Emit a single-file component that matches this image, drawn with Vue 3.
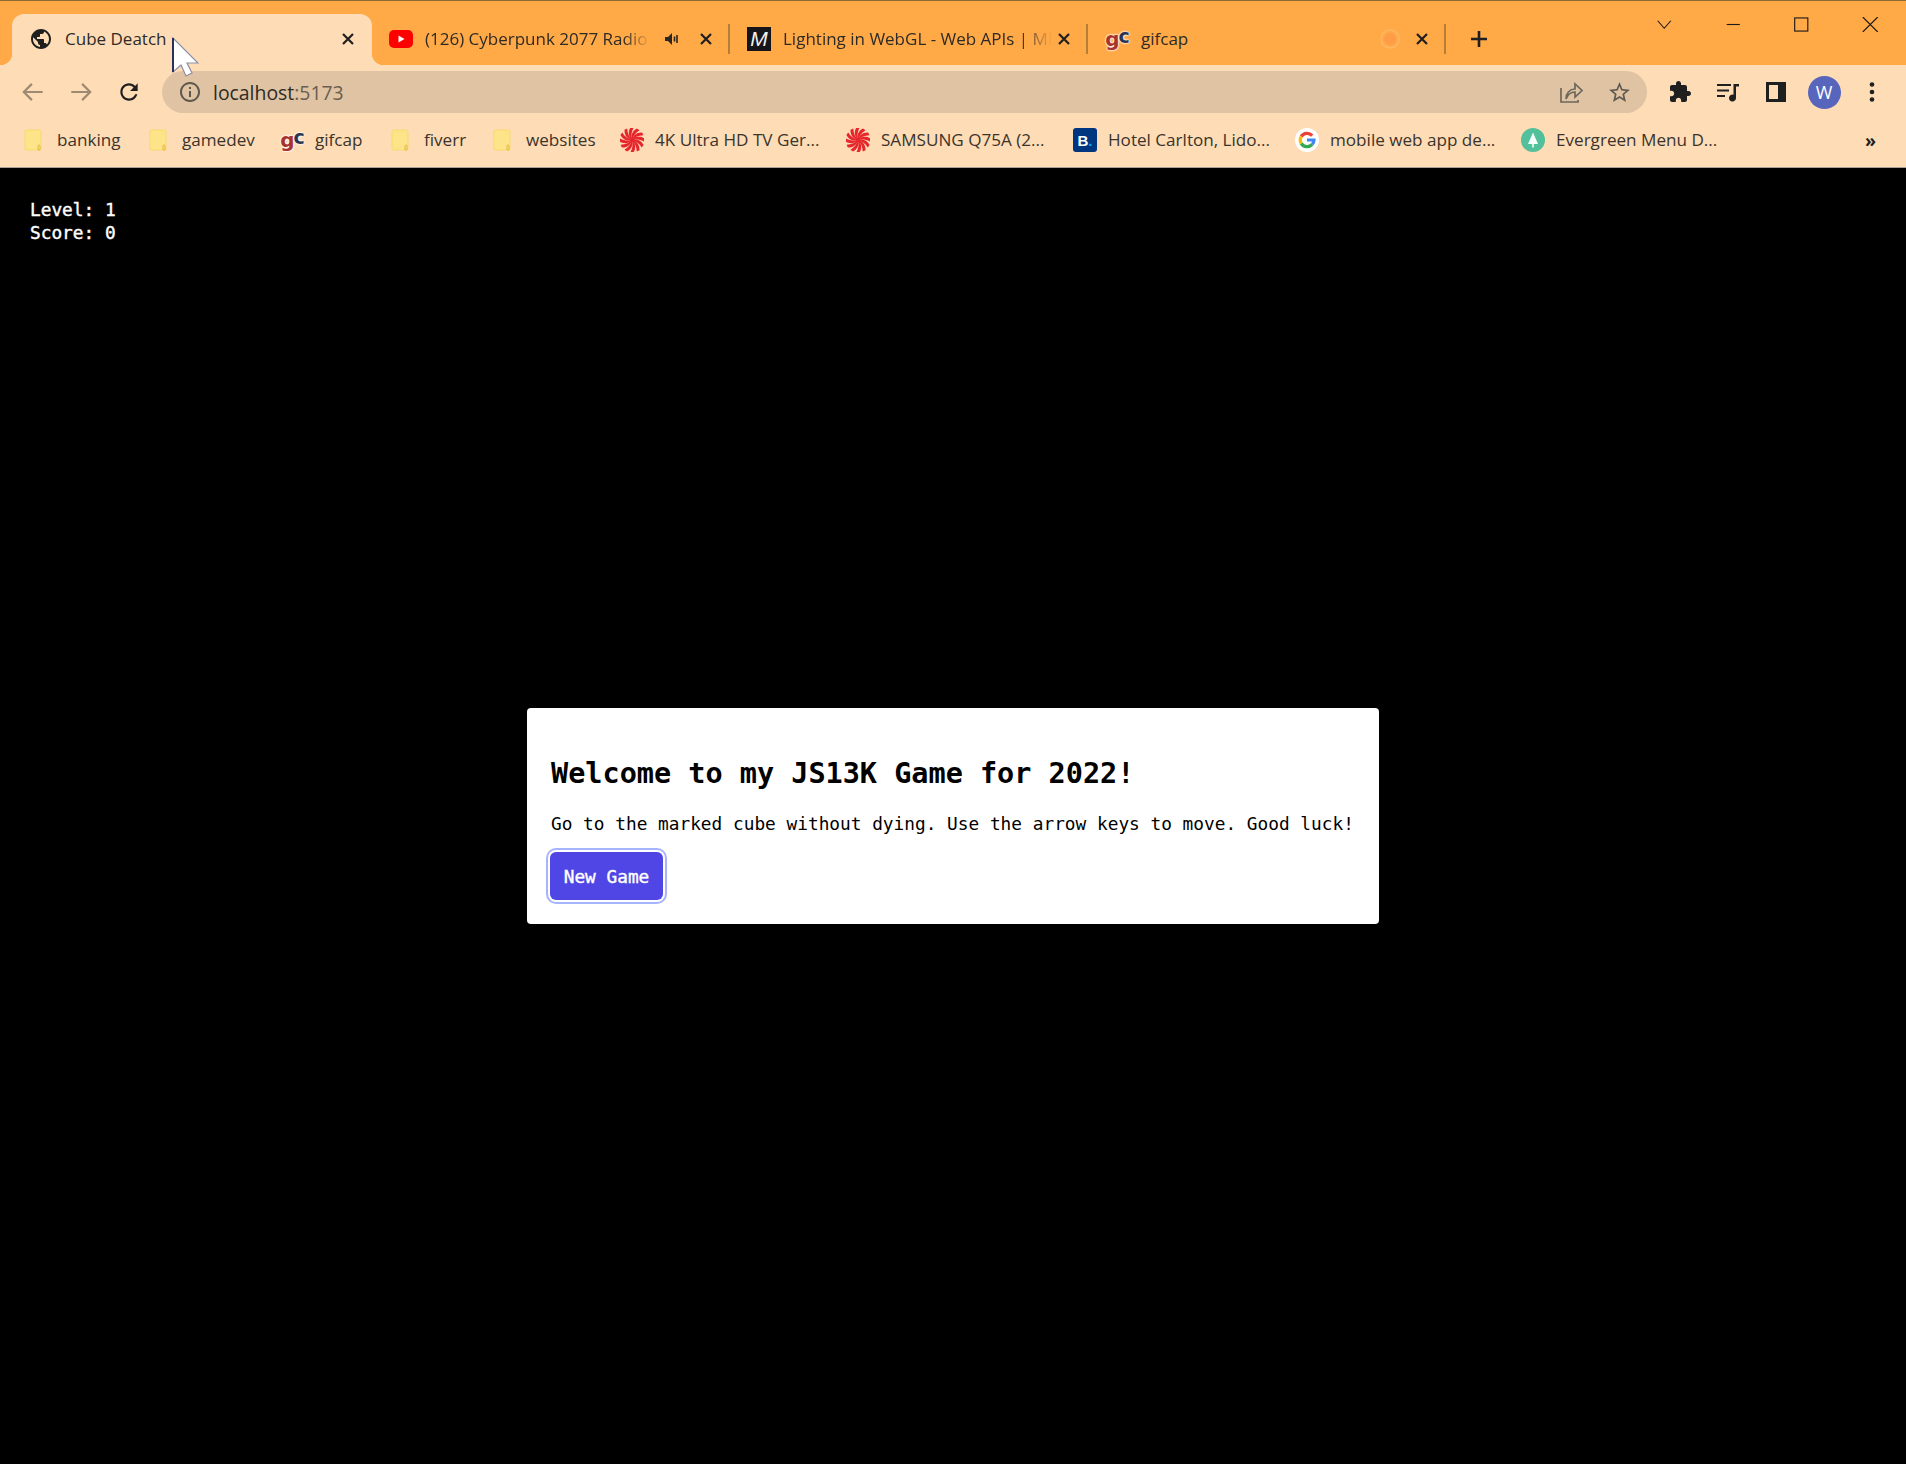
<template>
  <div class="browser">
    <div class="tabstrip">
      <div class="tab active">
        <svg class="fav" viewBox="0 0 24 24"><path fill="#1f1f1f" d="M12 2C6.48 2 2 6.48 2 12s4.48 10 10 10 10-4.48 10-10S17.52 2 12 2zm-1 17.93c-3.95-.49-7-3.85-7-7.93 0-.62.08-1.21.21-1.79L9 15v1c0 1.1.9 2 2 2v1.93zm6.9-2.54c-.26-.81-1-1.39-1.9-1.39h-1v-3c0-.55-.45-1-1-1H8v-2h2c.55 0 1-.45 1-1V7h2c1.1 0 2-.9 2-2v-.41c2.93 1.19 5 4.06 5 7.41 0 2.08-.8 3.97-2.1 5.39z"/></svg>
        <span class="title">Cube Deatch</span>
        <svg class="close" viewBox="0 0 12 12"><path d="M1 1l10 10M11 1L1 11"/></svg>
      </div>
      <div class="tab">
        <svg class="fav" viewBox="0 0 24 24"><rect x="0" y="3" width="24" height="18" rx="5" fill="#f00"/><path d="M9.500 8.500v7l6-3.500z" fill="#fff"/></svg>
        <span class="title fade">(126) Cyberpunk 2077 Radio</span>
        <svg class="audio" viewBox="0 0 16 16"><path fill="#2a2620" d="M1 6h3l4-4v12l-4-4H1z"/><path d="M10.500 5.500v5M13 4v8" stroke="#2a2620" stroke-width="1.600"/></svg>
        <svg class="close" viewBox="0 0 12 12"><path d="M1 1l10 10M11 1L1 11"/></svg>
      </div>
      <i class="sep"></i>
      <div class="tab">
        <span class="fav mdn">M</span>
        <span class="title fade">Lighting in WebGL - Web APIs | MDN</span>
        <svg class="close" viewBox="0 0 12 12"><path d="M1 1l10 10M11 1L1 11"/></svg>
      </div>
      <i class="sep"></i>
      <div class="tab">
        <span class="fav gc"><b>g</b><em>c</em></span>
        <span class="title">gifcap</span>
        <svg class="spin" viewBox="0 0 20 20"><circle cx="10" cy="10" r="9" fill="none" stroke="#ffb765" stroke-width="1.500"/><circle cx="10" cy="10" r="6" fill="#ff9c48"/></svg>
        <svg class="close" viewBox="0 0 12 12"><path d="M1 1l10 10M11 1L1 11"/></svg>
      </div>
      <i class="sep"></i>
      <svg class="plus" viewBox="0 0 18 18"><path d="M9 1v16M1 9h16"/></svg>
      <div class="winctl">
        <svg viewBox="0 0 16 16"><path d="M1 4l7 8 7-8"/></svg>
        <svg viewBox="0 0 16 16"><path d="M1 8h14"/></svg>
        <svg viewBox="0 0 16 16"><rect x="1" y="1" width="14" height="14"/></svg>
        <svg viewBox="0 0 16 16"><path d="M0 0l16 16M16 0L0 16"/></svg>
      </div>
    </div>

    <div class="toolbar">
      <button class="nav"><svg viewBox="0 0 24 24"><path class="dim" d="M21 12H4M11 4.500L3.500 12l7.500 7.500"/></svg></button>
      <button class="nav"><svg viewBox="0 0 24 24"><path class="dim" d="M3 12h17M13 4.500l7.500 7.500-7.500 7.500"/></svg></button>
      <button class="nav"><svg viewBox="0 0 24 24"><path class="fill" d="M17.650 6.350C16.200 4.900 14.210 4 12 4c-4.420 0-7.990 3.580-7.990 8s3.570 8 7.990 8c3.730 0 6.840-2.550 7.730-6h-2.080c-.82 2.330-3.040 4-5.650 4-3.310 0-6-2.690-6-6s2.690-6 6-6c1.660 0 3.140.69 4.220 1.780L13 11h7V4l-2.350 2.350z"/></svg></button>
      <div class="omnibox">
        <svg class="info" viewBox="0 0 24 24"><path d="M11 7h2v2h-2zm0 4h2v6h-2zm1-9C6.480 2 2 6.480 2 12s4.480 10 10 10 10-4.480 10-10S17.520 2 12 2zm0 18c-4.410 0-8-3.590-8-8s3.590-8 8-8 8 3.590 8 8-3.590 8-8 8z"/></svg>
        <span class="url">localhost<span class="port">:5173</span></span>
        <svg class="share" viewBox="0 0 24 24"><path d="M2 8v14h17v-2M2 22M7 19c0-6 4-10 9-10V4l7 6.500-7 6.500v-5c-4 0-7 2-9 7z"/></svg>
        <svg class="star" viewBox="0 0 24 24"><path d="M22 9.240l-7.190-.62L12 2 9.190 8.630 2 9.240l5.460 4.730L5.820 21 12 17.270 18.180 21l-1.630-7.030L22 9.240zM12 15.400l-3.760 2.270 1-4.280-3.320-2.880 4.380-.38L12 6.100l1.710 4.040 4.380.38-3.320 2.880 1 4.280L12 15.400z"/></svg>
      </div>
      <div class="tools">
        <span class="tool"><svg viewBox="0 0 24 24"><path fill="#1f1f1f" d="M20.500 11H19V7c0-1.100-.9-2-2-2h-4V3.500C13 2.120 11.880 1 10.500 1S8 2.120 8 3.500V5H4c-1.100 0-1.990.9-1.990 2v3.800H3.500c1.490 0 2.700 1.210 2.700 2.700s-1.210 2.700-2.700 2.700H2V20c0 1.100.9 2 2 2h3.800v-1.500c0-1.490 1.210-2.700 2.700-2.700 1.490 0 2.700 1.210 2.700 2.700V22H17c1.100 0 2-.9 2-2v-4h1.500c1.380 0 2.500-1.120 2.500-2.500S21.880 11 20.500 11z"/></svg></span>
        <span class="tool"><svg viewBox="0 0 24 24"><path d="M1 5h14M1 10.500h12M1 16h8" stroke="#1f1f1f" stroke-width="2" fill="none"/><path d="M17.500 4H23v2.500h-3V18a3.500 3.500 0 1 1-2.500-3.300z" fill="#1f1f1f"/></svg></span>
        <span class="tool"><svg viewBox="0 0 24 24"><path fill="#1f1f1f" d="M2 2h20v20H2zm3 3v14h9V5z" fill-rule="evenodd"/></svg></span>
        <span class="tool"><span class="avatar">W</span></span>
        <span class="tool"><svg viewBox="0 0 24 24"><circle cx="12" cy="4.500" r="2.300" fill="#1f1f1f"/><circle cx="12" cy="12" r="2.300" fill="#1f1f1f"/><circle cx="12" cy="19.500" r="2.300" fill="#1f1f1f"/></svg></span>
      </div>
    </div>

    <div class="bookmarks">
      <div v-for="b in bookmarks" :key="b.label" class="bm" :style="{ width: b.w + 'px' }">
        <span class="slot" :class="{ narrow: b.icon === 'folder' }">
          <svg v-if="b.icon === 'folder'" class="folder" viewBox="0 0 18 22"><rect x="1" y="1" width="16" height="20" rx="1.500" fill="#fde488" stroke="#fbd873"/><path d="M14 21v-4a1 1 0 0 1 2 0v4z" fill="none" stroke="#e5b93f"/></svg>
          <span v-else-if="b.icon === 'gc'" class="gc"><b>g</b><em>c</em></span>
          <svg v-else-if="b.icon === 'spiral'" class="bi" viewBox="0 0 24 24">
            <path v-for="a in blades" :key="a" :transform="`rotate(${a} 12 12)`" d="M12 12C10.500 8 12 3 17 .4L19.500 2.200C15 5 13 8.500 12 12z" fill="#e5262c"/>
            <circle cx="12" cy="12" r="2.200" fill="#e5262c"/>
          </svg>
          <span v-else-if="b.icon === 'booking'" class="booking">B<i>.</i></span>
          <svg v-else-if="b.icon === 'google'" class="bi" viewBox="0 0 24 24"><circle cx="12" cy="12" r="12" fill="#fff"/><path fill="none" stroke="#ea4335" stroke-width="3.200" d="M17.200 7.600A7 7 0 0 0 6.200 8.500"/><path fill="none" stroke="#fbbc05" stroke-width="3.200" d="M6.200 8.500a7 7 0 0 0 0 7"/><path fill="none" stroke="#34a853" stroke-width="3.200" d="M6.200 15.500a7 7 0 0 0 11 .9"/><path fill="none" stroke="#4285f4" stroke-width="3.200" d="M17.200 16.400A7 7 0 0 0 19 12h-7"/></svg>
          <svg v-else class="bi" viewBox="0 0 24 24"><circle cx="12" cy="12" r="12" fill="#52c09a"/><path d="M12 4.500l5 11.500h-4.200v3.500h-1.600V16H7z" fill="#f6fffb"/></svg>
        </span>
        <span class="bm-label">{{ b.label }}</span>
      </div>
      <span class="more">»</span>
    </div>

    <div class="page">
      <div class="hud">
        <div>Level: {{ level }}</div>
        <div>Score: {{ score }}</div>
      </div>
      <div class="modal">
        <h2>Welcome to my JS13K Game for 2022!</h2>
        <p>Go to the marked cube without dying. Use the arrow keys to move. Good luck!</p>
        <button class="start">New Game</button>
      </div>
    </div>

    <svg class="cursor" viewBox="0 0 28 42">
      <path d="M2 1v34l8-7 5 11 6-3-5-10h11z" fill="#fff" stroke="#8b8fa6" stroke-width="1.200"/>
      <path d="M2 1v34" stroke="#1a2350" stroke-width="1.800"/>
    </svg>
  </div>
</template>

<script setup>
const level = 1
const score = 0

const blades = [0, 30, 60, 90, 120, 150, 180, 210, 240, 270, 300, 330]

const bookmarks = [
  { label: 'banking', icon: 'folder', w: 125 },
  { label: 'gamedev', icon: 'folder', w: 131 },
  { label: 'gifcap', icon: 'gc', w: 111 },
  { label: 'fiverr', icon: 'folder', w: 102 },
  { label: 'websites', icon: 'folder', w: 127 },
  { label: '4K Ultra HD TV Ger...', icon: 'spiral', w: 226 },
  { label: 'SAMSUNG Q75A (2...', icon: 'spiral', w: 227 },
  { label: 'Hotel Carlton, Lido...', icon: 'booking', w: 222 },
  { label: 'mobile web app de...', icon: 'google', w: 226 },
  { label: 'Evergreen Menu D...', icon: 'tree', w: 226 },
]
</script>

<style>
html, body {
  margin: 0;
  background: #000;
}
</style>

<style scoped>
.browser {
  position: relative;
  display: flex;
  flex-direction: column;
  height: 1464px;
  font-family: "Open Sans", "Noto Sans", sans-serif;
  color: #2e2a25;
}

.tabstrip {
  display: flex;
  align-items: flex-end;
  height: 64px;
  padding-left: 12px;
  background: #ffa947;
  border-top: 1px solid #8d6a35;
}
.tab {
  position: relative;
  display: flex;
  align-items: center;
  flex: none;
  box-sizing: border-box;
  width: 356px;
  height: 51px;
  padding: 0 15px 2px 17px;
  font-size: 17px;
}
.tab.active {
  width: 360px;
  padding-right: 17px;
  background: #fedcb6;
  border-radius: 12px 12px 0 0;
}
.tab.active::before,
.tab.active::after {
  content: "";
  position: absolute;
  bottom: 0;
  width: 12px;
  height: 12px;
}
.tab.active::before {
  left: -12px;
  background: radial-gradient(circle at 0 0, transparent 12px, #fedcb6 12.500px);
}
.tab.active::after {
  right: -12px;
  background: radial-gradient(circle at 100% 0, transparent 12px, #fedcb6 12.500px);
}
.fav {
  flex: none;
  width: 24px;
  height: 24px;
  margin-right: 12px;
}
.title {
  flex: 1;
  overflow: hidden;
  white-space: nowrap;
}
.fade {
  -webkit-mask-image: linear-gradient(90deg, #000 88%, transparent 100%);
  mask-image: linear-gradient(90deg, #000 88%, transparent 100%);
}
.close {
  flex: none;
  width: 12px;
  height: 12px;
  margin: 0 1px 0 6px;
  fill: none;
  stroke: #1f1f1f;
  stroke-width: 2.200;
}
.audio {
  flex: none;
  width: 16px;
  height: 16px;
  margin: 0 14px 0 14px;
}
.spin {
  flex: none;
  width: 20px;
  height: 20px;
  margin-right: 10px;
}
.mdn {
  display: flex;
  align-items: center;
  justify-content: center;
  background: #15141a;
  color: #f1f1f1;
  font: italic 400 21px "Liberation Sans", sans-serif;
}
.gc {
  display: flex;
  align-items: baseline;
  justify-content: center;
  width: 24px;
  font: 700 20px/24px "DejaVu Sans", sans-serif;
  letter-spacing: -1px;
  text-shadow: 0 0 2px #fff, 0 0 2px #fff, 0 0 2px #fff;
}
.gc b {
  color: #a8322c;
}
.gc em {
  font-style: normal;
  font-size: 19px;
  color: #2c3550;
  position: relative;
  top: -3px;
}
.sep {
  flex: none;
  width: 2px;
  height: 30px;
  margin-bottom: 11px;
  background: #b57f37;
}
.plus {
  flex: none;
  width: 18px;
  height: 18px;
  margin: 0 0 17px 24px;
  fill: none;
  stroke: #1f1f1f;
  stroke-width: 2.600;
}
.winctl {
  display: flex;
  align-self: flex-start;
  margin-left: auto;
  margin-right: 2px;
  height: 46px;
  align-items: center;
}
.winctl svg {
  width: 68.500px;
  height: 15px;
  fill: none;
  stroke: #1a1a1a;
  stroke-width: 1.200;
}

.toolbar {
  display: flex;
  align-items: flex-end;
  box-sizing: border-box;
  height: 48px;
  padding: 0 10px 0 9px;
  background: #fedcb6;
}
.nav {
  flex: none;
  display: flex;
  align-items: center;
  justify-content: center;
  width: 48px;
  height: 42px;
  padding: 0;
  background: none;
  border: 0;
}
.nav svg {
  width: 26px;
  height: 26px;
}
.dim {
  fill: none;
  stroke: #9e8a73;
  stroke-width: 2;
}
.fill {
  fill: #1f1f1f;
}
.omnibox {
  flex: 1;
  display: flex;
  align-items: center;
  height: 42px;
  margin: 0 9px 0 9px;
  padding: 0 15px 0 16px;
  border-radius: 21px;
  background: #dfc3a3;
}
.info {
  width: 24px;
  height: 24px;
  fill: #5d574d;
}
.url {
  flex: 1;
  margin-left: 11px;
  font-size: 19.400px;
  color: #2e2a25;
}
.port {
  color: #6a5f50;
}
.share {
  width: 24px;
  height: 24px;
  margin-right: 24px;
  fill: none;
  stroke: #6d675c;
  stroke-width: 1.700;
}
.star {
  width: 25px;
  height: 25px;
  fill: #5f5a50;
}
.tools {
  display: flex;
  align-self: stretch;
}
.tool {
  display: flex;
  align-items: center;
  justify-content: center;
  width: 48px;
  height: 42px;
  align-self: flex-end;
}
.tool svg {
  width: 24px;
  height: 24px;
}
.avatar {
  display: flex;
  align-items: center;
  justify-content: center;
  width: 33px;
  height: 33px;
  border-radius: 50%;
  background: #5765bd;
  color: #fff;
  font-size: 18px;
}

.bookmarks {
  display: flex;
  align-items: center;
  box-sizing: border-box;
  height: 55px;
  padding-left: 24px;
  background: #fedcb6;
  border-bottom: 1px solid #a8a097;
}
.bm {
  display: flex;
  align-items: center;
  flex: none;
  font-size: 17.100px;
  white-space: nowrap;
  color: #3a342c;
}
.bm-label {
  padding-bottom: 2px;
}
.slot {
  display: flex;
  align-items: center;
  flex: none;
  width: 35px;
}
.slot.narrow {
  width: 33px;
}
.folder {
  width: 18px;
  height: 22px;
}
.bi {
  width: 24px;
  height: 24px;
}
.booking {
  display: flex;
  align-items: center;
  justify-content: center;
  width: 24px;
  height: 24px;
  border-radius: 3px;
  background: #003580;
  color: #fff;
  font: 700 15px "Liberation Sans", sans-serif;
}
.booking i {
  font-style: normal;
  color: #0ea5e9;
}
.more {
  margin-left: auto;
  margin-right: 30px;
  font-size: 18px;
  font-weight: 700;
  color: #1f1f1f;
}

.page {
  flex: 1;
  position: relative;
  display: flex;
  align-items: center;
  justify-content: center;
  background: #000;
  font-family: "DejaVu Sans Mono", monospace;
}
.hud {
  position: absolute;
  left: 30px;
  top: 30px;
  color: #fff;
  font-size: 17.800px;
  line-height: 23px;
  -webkit-text-stroke: 0.4px #fff;
}
.modal {
  box-sizing: border-box;
  width: 852px;
  height: 216px;
  padding: 48px 24px 0;
  background: #fff;
  border-radius: 4px;
  color: #000;
}
.modal h2 {
  margin: 0;
  font-size: 28.500px;
  font-weight: 700;
  line-height: 36px;
}
.modal p {
  margin: 18px 0 0;
  font-size: 17.800px;
  line-height: 28px;
}
.start {
  display: block;
  width: 113px;
  height: 48px;
  margin: 14px 0 0 -1px;
  padding: 0;
  border: 0;
  border-radius: 6px;
  background: #4f46e5;
  color: #fff;
  font: 500 17.800px "DejaVu Sans Mono", monospace;
  -webkit-text-stroke: 0.4px #fff;
  box-shadow: 0 0 0 2px #fff, 0 0 0 4px #a5b4fc;
}

.cursor {
  position: absolute;
  left: 171px;
  top: 37px;
  width: 28px;
  height: 42px;
}
</style>
